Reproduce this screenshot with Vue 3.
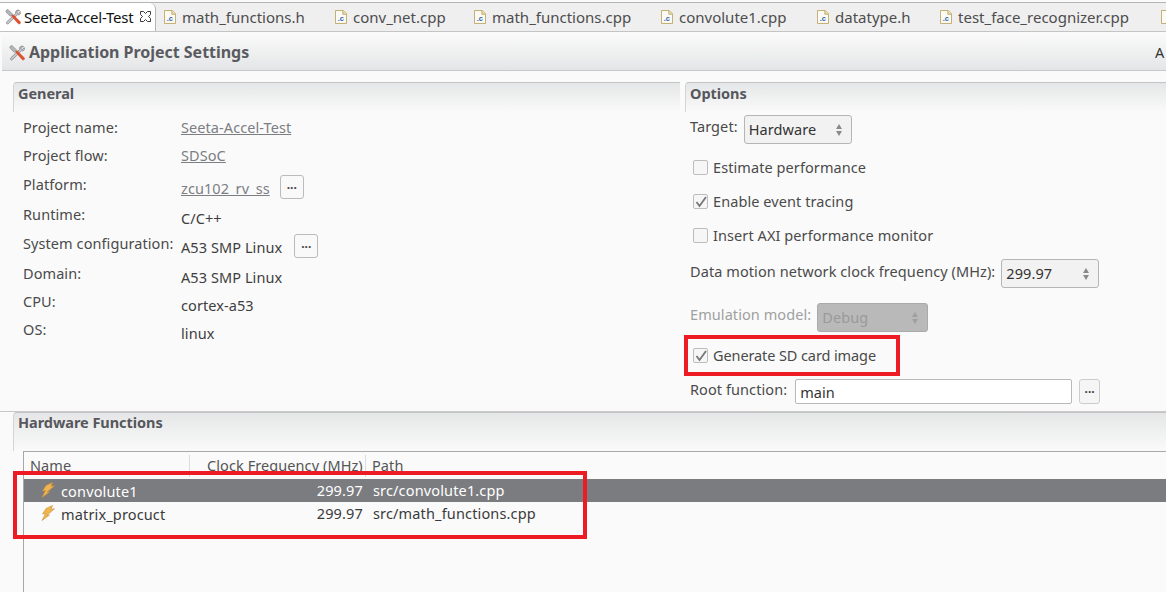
<script setup>
const tabs = [
  { name: 'math_functions.h', width: 171 },
  { name: 'conv_net.cpp', width: 139 },
  { name: 'math_functions.cpp', width: 187 },
  { name: 'convolute1.cpp', width: 156 },
  { name: 'datatype.h', width: 123 },
  { name: 'test_face_recognizer.cpp', width: 221 },
  { name: '', width: 10 }
]
const general = [
  { label: 'Project name:', value: 'Seeta-Accel-Test', link: true },
  { label: 'Project flow:', value: 'SDSoC', link: true },
  { label: 'Platform:', value: 'zcu102_rv_ss', link: true, more: 'm1' },
  { label: 'Runtime:', value: 'C/C++' },
  { label: 'System configuration:', value: 'A53 SMP Linux', more: 'm2' },
  { label: 'Domain:', value: 'A53 SMP Linux' },
  { label: 'CPU:', value: 'cortex-a53' },
  { label: 'OS:', value: 'linux' }
]
const checks = [
  { label: 'Estimate performance', on: false },
  { label: 'Enable event tracing', on: true },
  { label: 'Insert AXI performance monitor', on: false }
]
const functions = [
  { name: 'convolute1', clock: '299.97', path: 'src/convolute1.cpp', selected: true },
  { name: 'matrix_procuct', clock: '299.97', path: 'src/math_functions.cpp', selected: false }
]
</script>

<template>
  <div class="app">
    <div class="tabbar">
      <div class="tab active">
        <svg class="ic" viewBox="0 0 16 16">
          <path d="M14.500 1.500c-1.500-.8-3.200-.3-3.800 1-.3.700-.2 1.300 0 1.900L2 12.600c-.8.800-.8 1.600-.2 2.100.6.500 1.300.4 2-.3l8.600-8.600c1.200.4 2.600-.1 3-1.300.2-.7.100-1.300-.1-1.900l-2 1.700-1.400-.4-.2-1.300z" fill="#c4c7ca" stroke="#6e7074" stroke-width=".6"/>
          <path d="M1.500 1l1.500-.5 4.500 4.500-.8 1.500-1.500.8L.8 3z" fill="#b4b7ba" stroke="#707276" stroke-width=".5"/>
          <path d="M6.500 7l1.500-1.500 7 7c.7.800.7 1.500.1 2.100-.6.600-1.400.5-2.100-.1z" fill="#e2512c" stroke="#b53a1e" stroke-width=".4"/>
        </svg>
        <span class="tabname">Seeta-Accel-Test</span>
        <svg class="close" viewBox="0 0 11 11"><path d="M.5.500h3l2 2 2-2h3v3l-2 2 2 2v3h-3l-2-2-2 2h-3v-3l2-2-2-2z" fill="#fff" stroke="#3a3a3a" stroke-width="1"/></svg>
      </div>
      <div v-for="t in tabs" :key="t.name" class="tab" :style="{ width: t.width + 'px' }">
        <svg class="file" viewBox="0 0 13 15">
          <path d="M.5.500h8.500l3.500 3.500v10.500H.5z" fill="#fbfaf4" stroke="#bda765"/>
          <path d="M8.500.500v4h4" fill="#ecdca6" stroke="#bda765"/>
          <text v-if="t.name" x="3" y="12" class="ctext">.c</text>
        </svg>
        <span>{{ t.name }}</span>
      </div>
    </div>

    <div class="formhead">
      <svg class="ic head-ic" viewBox="0 0 16 16">
        <path d="M14.500 1.500c-1.500-.8-3.200-.3-3.800 1-.3.700-.2 1.300 0 1.900L2 12.600c-.8.800-.8 1.600-.2 2.100.6.500 1.300.4 2-.3l8.600-8.600c1.200.4 2.600-.1 3-1.300.2-.7.100-1.300-.1-1.900l-2 1.700-1.400-.4-.2-1.300z" fill="#c4c7ca" stroke="#6e7074" stroke-width=".6"/>
        <path d="M1.500 1l1.500-.5 4.500 4.500-.8 1.500-1.500.8L.8 3z" fill="#b4b7ba" stroke="#707276" stroke-width=".5"/>
        <path d="M6.500 7l1.500-1.500 7 7c.7.800.7 1.500.1 2.100-.6.600-1.400.5-2.100-.1z" fill="#e2512c" stroke="#b53a1e" stroke-width=".4"/>
      </svg>
      <h1>Application Project Settings</h1>
      <span class="head-right">A</span>
    </div>

    <div class="columns">
      <section class="sec general">
        <h2>General</h2>
        <div class="grid">
          <template v-for="g in general" :key="g.label">
            <span class="lbl">{{ g.label }}</span>
            <span class="val" :class="{ link: g.link }">
              <span>{{ g.value }}</span>
              <button v-if="g.more" class="more" :class="g.more">...</button>
            </span>
          </template>
        </div>
      </section>

      <section class="sec options">
        <h2>Options</h2>
        <div class="row target">
          <span class="lbl">Target:</span>
          <div class="combo hw">Hardware<i class="spin"></i></div>
        </div>
        <label v-for="c in checks" :key="c.label" class="check">
          <span class="box">
            <svg v-if="c.on" viewBox="0 0 14 14"><path d="M2.500 7l3 4L12 2" fill="none" stroke="#777" stroke-width="1.800"/></svg>
          </span>
          {{ c.label }}
        </label>
        <div class="row clock">
          <span class="lbl">Data motion network clock frequency (MHz):</span>
          <div class="combo freq">299.97<i class="spin"></i></div>
        </div>
        <div class="row emu">
          <span class="lbl off">Emulation model:</span>
          <div class="combo debug">Debug<i class="spin"></i></div>
        </div>
        <label class="check sd">
          <span class="box"><svg viewBox="0 0 14 14"><path d="M2.500 7l3 4L12 2" fill="none" stroke="#777" stroke-width="1.800"/></svg></span>
          Generate SD card image
        </label>
        <div class="row root">
          <span class="lbl">Root function:</span>
          <div class="field">main</div>
          <button class="more rootmore">...</button>
        </div>
      </section>
    </div>

    <section class="sec hw-sec">
      <h2>Hardware Functions</h2>
      <div class="tree">
        <div class="tree-head">
          <span class="c1">Name</span>
          <span class="c2">Clock Frequency (MHz)</span>
          <span class="c3">Path</span>
        </div>
        <div v-for="f in functions" :key="f.name" class="tree-row" :class="{ sel: f.selected }">
          <span class="c1 namecell">
            <svg class="bolt" viewBox="0 0 15 16"><path d="M11.500.500L5 3.500 1.500 9l3-.5L1 15.500l7.500-5.500-2.500.2 7.500-6.500-3.500.5z" fill="#efb44f" stroke="#c9923a" stroke-width=".6"/></svg>
            {{ f.name }}
          </span>
          <span class="c2 num">{{ f.clock }}</span>
          <span class="c3">{{ f.path }}</span>
        </div>
      </div>
    </section>

    <div class="mark mark-sd"></div>
    <div class="mark mark-fn"></div>
  </div>
</template>

<style>
html, body { margin: 0; padding: 0; background: #fff; }
</style>

<style scoped>
.app {
  position: relative;
  width: 1166px;
  height: 592px;
  overflow: hidden;
  background: #fafafa;
  font-family: "Noto Sans", sans-serif;
  font-size: 14.5px;
  letter-spacing: 0.08px;
  color: #4d4d4d;
  display: flex;
  flex-direction: column;
}
.tabbar {
  height: 28px;
  margin-top: 2px;
  flex: none;
  display: flex;
  background: #efefef;
  border-top: 1px solid #b5b5b5;
  border-bottom: 1px solid #c4c4c4;
  overflow: hidden;
  font-size: 15px;
  letter-spacing: 0;
}
.tab {
  flex: none;
  display: flex;
  align-items: center;
  gap: 6px;
  padding: 0 0 1px 8px;
  box-sizing: border-box;
  white-space: nowrap;
}
.tab.active {
  width: 156px;
  padding-left: 5px;
  gap: 3px;
  background: #fff;
  color: #111;
  border-right: 1px solid #b5b5b5;
  border-top-right-radius: 6px;
}
.tabname { width: 113px; letter-spacing: -0.2px; }
.ic { width: 16px; height: 16px; flex: none; }
.close { width: 11px; height: 11px; flex: none; }
.file { width: 12px; height: 14px; flex: none; }
.ctext { font: bold 8px "Liberation Sans", sans-serif; fill: #2f63a8; }

.formhead {
  flex: none;
  height: 38px;
  margin: 1px 0 0 2px;
  box-sizing: border-box;
  display: flex;
  align-items: center;
  padding: 0 0 0 7px;
  background: linear-gradient(#fbfbfb, #e4e5e6);
  border-bottom: 1px solid #c8c8c8;
}
.head-ic { margin-top: 3px; }
.formhead h1 {
  margin: 0 0 0 4px;
  font-size: 16px;
  font-weight: 700;
  letter-spacing: -0.03px;
  color: #595b60;
}
.head-right { margin-left: auto; color: #333; width: 11px; overflow: hidden; }

.columns {
  flex: none;
  height: 341px;
  display: flex;
  padding: 11px 0 0 13px;
  box-sizing: border-box;
  gap: 5px;
  border-bottom: 1px solid #c8c8c8;
}
.sec h2 {
  margin: 0;
  height: 30px;
  padding: 0 0 0 4px;
  box-sizing: border-box;
  font-size: 14.5px;
  font-weight: 700;
  letter-spacing: -0.05px;
  color: #55575c;
  background: linear-gradient(#e5e6e7, #fafafa);
  border-top: 1px solid #c4c4c4;
  border-left: 1px solid #d4d4d4;
  border-top-left-radius: 4px;
}
.general { width: 667px; flex: none; }
.options { flex: 1; min-width: 0; }

.grid {
  display: grid;
  grid-template-columns: 158px 1fr;
  grid-template-rows: 28px 29px 30px 29px 30px 28px 28px 28px;
  padding: 5px 0 0 10px;
}
.lbl { white-space: nowrap; color: #4a4a4a; line-height: 20px; }
.val {
  display: flex;
  align-items: flex-start;
  line-height: 20px;
  color: #3e3e3e;
}
.grid .val:nth-child(n+5) > span:first-child { padding-top: 4px; }
.grid .val:nth-child(5) > span:first-child { padding-top: 3px; }
.grid .val:nth-child(9) > span:first-child { padding-top: 3px; }
.link > span:first-child { color: #7c7e83; text-decoration: underline; }
.more {
  width: 24px;
  height: 24px;
  margin: 0 0 0 10px;
  padding: 0 0 6px;
  border: 1px solid #bbb;
  border-radius: 3px;
  background: #f9f9f9;
  font: bold 12px "Noto Sans", sans-serif;
  color: #444;
  flex: none;
}
.m1 { margin-top: 1px; margin-left: 10px; }
.m2 { margin-top: 1px; margin-left: 12px; }

.row { display: flex; align-items: flex-start; padding-left: 5px; }
.target { margin-top: 3px; height: 42px; }
.target .lbl { margin-top: 1px; }
.combo {
  position: relative;
  box-sizing: border-box;
  height: 29px;
  line-height: 27px;
  padding-left: 4px;
  border: 1px solid #b5b5b5;
  border-radius: 3px;
  background: #f2f2f2;
  color: #333;
}
.spin {
  position: absolute;
  right: 9px;
  top: 8px;
  width: 0;
  height: 0;
  border-left: 3px solid transparent;
  border-right: 3px solid transparent;
  border-bottom: 5px solid #8a8a8a;
}
.spin::after {
  content: "";
  position: absolute;
  left: -3px;
  top: 7px;
  width: 0;
  height: 0;
  border-left: 3px solid transparent;
  border-right: 3px solid transparent;
  border-top: 5px solid #8a8a8a;
}
.hw { width: 108px; margin-left: 6px; }
.check {
  display: flex;
  align-items: center;
  height: 20px;
  margin: 0 0 14px 8px;
  gap: 5px;
  color: #4a4a4a;
}
.box {
  width: 13px;
  height: 13px;
  border: 1px solid #bdbdbd;
  border-radius: 2px;
  background: #f6f6f6;
  flex: none;
}
.box svg { display: block; width: 14px; height: 14px; }
.clock { height: 44px; }
.clock .lbl { margin-top: 2px; }
.freq { width: 98px; margin-left: 6px; }
.emu { height: 32px; }
.lbl.off { color: #a0a0a0; margin-top: 1px; }
.debug { width: 111px; margin-left: 6px; background: #b9b9b9; border-color: #aaa; color: #9a9a9a; }
.debug .spin, .debug .spin::after { border-bottom-color: #a0a0a0; border-top-color: #a0a0a0; }
.sd { margin: 4px 0 0 8px; height: 32px; letter-spacing: -0.1px; }
.root { margin-top: 8px; }
.field {
  width: 277px;
  height: 25px;
  box-sizing: border-box;
  margin-left: 8px;
  padding-left: 4px;
  line-height: 25px;
  border: 1px solid #b9b9b9;
  border-radius: 2px;
  background: #fff;
  color: #333;
}
.rootmore { width: 21px; height: 25px; margin-left: 7px; background: #f5f5f5; border-color: #ccc; }

.hw-sec { flex: 1; padding-left: 13px; min-height: 0; }
.hw-sec h2 { height: 39px; line-height: 18px; }
.tree {
  margin: 0 0 0 10px;
  height: 200px;
  border-top: 1px solid #a8a8a8;
  border-left: 1px solid #a8a8a8;
}
.tree-head, .tree-row { display: grid; grid-template-columns: 166px 176px 1fr; white-space: nowrap; }
.tree-head { height: 27px; color: #555; }
.tree-head span { padding-left: 6px; border-right: 1px solid #ddd; height: 22px; margin-top: 3px; line-height: 20px; box-sizing: border-box; }
.tree-head .c2 { padding-left: 17px; }
.tree-head .c3 { border-right: 0; }
.tree-row { height: 23px; line-height: 22px; color: #3a3a3a; letter-spacing: 0.15px; }
.tree-row .c3 { padding-left: 7px; }
.tree-row.sel { background: #7b7c80; color: #fff; }
.namecell { display: flex; align-items: center; gap: 5px; padding-left: 17px; }
.bolt { width: 15px; height: 16px; flex: none; margin-top: -1px; }
.num { text-align: right; padding-right: 3px; }

.mark { position: absolute; border: 4px solid #ed1c24; box-sizing: border-box; }
.mark-sd { left: 684px; top: 335px; width: 216px; height: 41px; }
.mark-fn { left: 13px; top: 471px; width: 574px; height: 68px; }
</style>
